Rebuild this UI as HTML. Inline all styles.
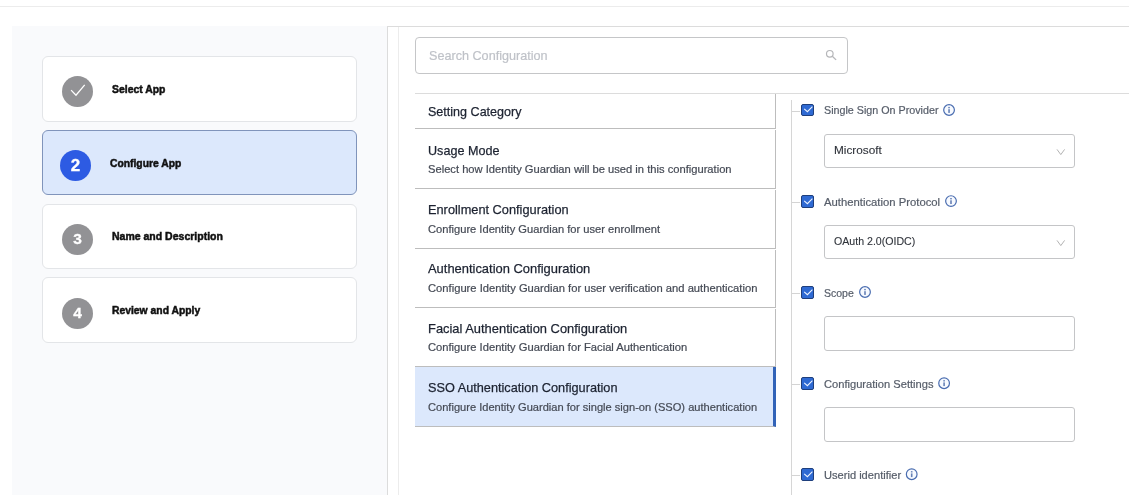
<!DOCTYPE html>
<html><head><meta charset="utf-8">
<style>
*{box-sizing:border-box;margin:0;padding:0}
html,body{width:1129px;height:495px;overflow:hidden;background:#fff;font-family:"Liberation Sans",sans-serif;}
body{position:relative}
.abs{position:absolute}
.tx{white-space:nowrap;transform-origin:0 0;line-height:normal}
.topline{left:0;top:6px;width:1129px;height:1px;background:#ececec}
.leftpanel{left:12px;top:26px;width:375px;height:480px;background:#f9fafc}
.rightbox{left:387px;top:26px;width:760px;height:480px;border:1px solid #dcdcdc;background:#fff}
.vline2{left:398px;top:27px;width:1px;height:480px;background:#ececec}
.card{left:42px;width:315px;height:65px;border:1px solid #e3e5e8;border-radius:6px;background:#fff}
.card.active{background:#dce8fc;border-color:#8094bb}
.circ{width:31px;height:31px;border-radius:50%;background:#929295;color:#fff;font-weight:bold;font-size:15.5px;text-align:center;line-height:30px;-webkit-text-stroke:0.3px #fff}
.circ.blue{background:#2d5be3}
.ctext{font-weight:bold;font-size:12px;color:#111;-webkit-text-stroke:0.5px #111}
.search{left:415px;top:37px;width:433px;height:37px;border:1px solid #c5c6c8;border-radius:4px;background:#fff}
.stext{font-size:13.5px;color:#bfc2c8;-webkit-text-stroke:0.2px #bfc2c8}
.row{left:415px;width:361px;border-bottom:1px solid #bdbdbd;border-right:1px solid #bdbdbd}
.t{font-size:13.5px;color:#1c2230;-webkit-text-stroke:0.25px #1c2230}
.d{font-size:12px;color:#454a55;-webkit-text-stroke:0.2px #454a55}
.row.sel{background:#dce8fc;border-right:3px solid #3263b8}
.tree{left:791px;top:100px;width:1px;height:401px;background:#d6d6d6}
.tick{left:792px;width:8px;height:1px;background:#d4d4d4}
.cb{left:801px;width:13px;height:13px;background:#2f6ad3;border:1px solid #1f3f7c;border-radius:2px}
.cb svg{position:absolute;left:-1px;top:-1px}
.lbl{font-size:12px;color:#565d69;-webkit-text-stroke:0.2px #565d69}
.val{font-size:12px;color:#2f333a;-webkit-text-stroke:0.1px #2f333a}
.inp{left:824px;width:251px;height:34px;border:1px solid #c4c5c7;border-radius:3px;background:#fff}
.topr{left:415px;top:93px;width:714px;height:1px;background:#dcdcdc}
#wrap{position:absolute;left:0;top:0;width:1129px;height:495px;overflow:hidden;will-change:transform}
</style></head><body><div id="wrap">
<div class="abs topline"></div>
<div class="abs leftpanel"></div>
<div class="abs rightbox"></div>
<div class="abs vline2"></div>

<div class="abs card" style="top:56px;height:66px"></div>
<div class="abs card active" style="top:130px"></div>
<div class="abs card" style="top:204px"></div>
<div class="abs card" style="top:277px;height:66px"></div>

<div class="abs circ" style="left:62px;top:75.5px"><svg width="31" height="31" viewBox="0 0 31 31" style="display:block"><path d="M9.1 14.1 L14 19.2 L22.7 8.9" fill="none" stroke="#fff" stroke-width="1.3"/></svg></div>
<div class="abs circ blue" style="left:60px;top:150px;font-size:17px;line-height:32px">2</div>
<div class="abs circ" style="left:62px;top:223.5px">3</div>
<div class="abs circ" style="left:62px;top:298px">4</div>

<div class="abs search">
<svg class="abs" style="left:409px;top:11px" width="12" height="12" viewBox="0 0 12 12"><circle cx="4.8" cy="4.8" r="3.3" fill="none" stroke="#b5b6b9" stroke-width="1.2"/><path d="M7.3 7.3 L11.1 10.9" stroke="#b5b6b9" stroke-width="1.3"/></svg>
</div>

<div class="abs row" style="top:94px;height:35px"></div>
<div class="abs row" style="top:130px;height:59px"></div>
<div class="abs row" style="top:190px;height:59px"></div>
<div class="abs row" style="top:250px;height:58px"></div>
<div class="abs row" style="top:309px;height:58px"></div>
<div class="abs row sel" style="top:367px;height:60px"></div>

<div class="abs topr"></div>
<div class="abs tree"></div>

<div class="abs tick" style="top:111px"></div>
<div class="abs cb" style="top:104px;height:12px"><svg width="13" height="12" viewBox="0 0 13 12"><path d="M3.2 4.8 L6.4 7.7 L11.4 2.6999999999999993" fill="none" stroke="#eef4ff" stroke-width="1.1"/></svg></div>
<svg class="abs" style="left:942px;top:103px" width="15" height="15" viewBox="0 0 15 15"><circle cx="7.05" cy="7.00" r="5.35" fill="#f7faff" stroke="#4a6db0" stroke-width="1.2"/><rect x="6.25" y="6.20" width="1.6" height="3.7" fill="#6681b6"/><rect x="6.25" y="3.90" width="1.6" height="1.4" fill="#6681b6"/></svg>
<div class="abs inp" style="top:134px;height:34px"></div>
<svg class="abs" style="left:1054px;top:147px" width="13" height="11" viewBox="0 0 13 11"><path d="M3.00 2.40 L6.80 7.60 L10.60 2.40" fill="none" stroke="#b3b3b3" stroke-width="1"/></svg>
<div class="abs tick" style="top:202px"></div>
<div class="abs cb" style="top:195px;height:13px"><svg width="13" height="13" viewBox="0 0 13 13"><path d="M3.2 5.8 L6.4 8.7 L11.4 3.6999999999999993" fill="none" stroke="#eef4ff" stroke-width="1.1"/></svg></div>
<svg class="abs" style="left:944px;top:194px" width="15" height="15" viewBox="0 0 15 15"><circle cx="7.00" cy="7.10" r="5.35" fill="#f7faff" stroke="#4a6db0" stroke-width="1.2"/><rect x="6.20" y="6.30" width="1.6" height="3.7" fill="#6681b6"/><rect x="6.20" y="4.00" width="1.6" height="1.4" fill="#6681b6"/></svg>
<div class="abs inp" style="top:225px;height:34px"></div>
<svg class="abs" style="left:1054px;top:238px" width="13" height="11" viewBox="0 0 13 11"><path d="M3.00 2.40 L6.80 7.60 L10.60 2.40" fill="none" stroke="#b3b3b3" stroke-width="1"/></svg>
<div class="abs tick" style="top:293px"></div>
<div class="abs cb" style="top:286px;height:13px"><svg width="13" height="13" viewBox="0 0 13 13"><path d="M3.2 5.8 L6.4 8.7 L11.4 3.6999999999999993" fill="none" stroke="#eef4ff" stroke-width="1.1"/></svg></div>
<svg class="abs" style="left:858px;top:285px" width="15" height="15" viewBox="0 0 15 15"><circle cx="7.00" cy="7.00" r="5.35" fill="#f7faff" stroke="#4a6db0" stroke-width="1.2"/><rect x="6.20" y="6.20" width="1.6" height="3.7" fill="#6681b6"/><rect x="6.20" y="3.90" width="1.6" height="1.4" fill="#6681b6"/></svg>
<div class="abs inp" style="top:316px;height:35px"></div>
<div class="abs tick" style="top:384px"></div>
<div class="abs cb" style="top:377px;height:13px"><svg width="13" height="13" viewBox="0 0 13 13"><path d="M3.2 5.8 L6.4 8.7 L11.4 3.6999999999999993" fill="none" stroke="#eef4ff" stroke-width="1.1"/></svg></div>
<svg class="abs" style="left:937px;top:376px" width="15" height="15" viewBox="0 0 15 15"><circle cx="7.10" cy="7.20" r="5.35" fill="#f7faff" stroke="#4a6db0" stroke-width="1.2"/><rect x="6.30" y="6.40" width="1.6" height="3.7" fill="#6681b6"/><rect x="6.30" y="4.10" width="1.6" height="1.4" fill="#6681b6"/></svg>
<div class="abs inp" style="top:407px;height:35px"></div>
<div class="abs tick" style="top:475px"></div>
<div class="abs cb" style="top:468px;height:13px"><svg width="13" height="13" viewBox="0 0 13 13"><path d="M3.2 5.8 L6.4 8.7 L11.4 3.6999999999999993" fill="none" stroke="#eef4ff" stroke-width="1.1"/></svg></div>
<svg class="abs" style="left:904px;top:467px" width="15" height="15" viewBox="0 0 15 15"><circle cx="7.70" cy="7.20" r="5.35" fill="#f7faff" stroke="#4a6db0" stroke-width="1.2"/><rect x="6.90" y="6.40" width="1.6" height="3.7" fill="#6681b6"/><rect x="6.90" y="4.10" width="1.6" height="1.4" fill="#6681b6"/></svg>

<div class="abs tx ctext" id="c1" style="left:112px;top:83.00px;font-size:11px;transform:scaleX(0.9477)">Select App</div>
<div class="abs tx ctext" id="c2" style="left:110px;top:157.00px;font-size:11px;transform:scaleX(0.9385)">Configure App</div>
<div class="abs tx ctext" id="c3" style="left:112px;top:230.00px;font-size:11px;transform:scaleX(0.9549)">Name and Description</div>
<div class="abs tx ctext" id="c4" style="left:112px;top:304.00px;font-size:11px;transform:scaleX(0.9410)">Review and Apply</div>
<div class="abs tx stext" id="s0" style="left:428.8px;top:48.30px;font-size:13.5px;transform:scaleX(0.9351)">Search Configuration</div>
<div class="abs tx t" id="t0" style="left:427.8px;top:104.00px;font-size:13.5px;transform:scaleX(0.9298)">Setting Category</div>
<div class="abs tx t" id="t1" style="left:427.8px;top:143.00px;font-size:13.5px;transform:scaleX(0.9328)">Usage Mode</div>
<div class="abs tx d" id="d1" style="left:427.8px;top:163.00px;font-size:10.7px;transform:scaleX(1.0450)">Select how Identity Guardian will be used in this configuration</div>
<div class="abs tx t" id="t2" style="left:427.8px;top:202.00px;font-size:13.5px;transform:scaleX(0.9462)">Enrollment Configuration</div>
<div class="abs tx d" id="d2" style="left:427.8px;top:222.60px;font-size:10.7px;transform:scaleX(1.0418)">Configure Identity Guardian for user enrollment</div>
<div class="abs tx t" id="t3" style="left:427.8px;top:261.00px;font-size:13.5px;transform:scaleX(0.9568)">Authentication Configuration</div>
<div class="abs tx d" id="d3" style="left:427.8px;top:282.00px;font-size:10.7px;transform:scaleX(1.0481)">Configure Identity Guardian for user verification and authentication</div>
<div class="abs tx t" id="t4" style="left:427.8px;top:321.00px;font-size:13.5px;transform:scaleX(0.9552)">Facial Authentication Configuration</div>
<div class="abs tx d" id="d4" style="left:427.8px;top:341.00px;font-size:10.7px;transform:scaleX(1.0462)">Configure Identity Guardian for Facial Authentication</div>
<div class="abs tx t" id="t5" style="left:427.8px;top:380.00px;font-size:13.5px;transform:scaleX(0.9421)">SSO Authentication Configuration</div>
<div class="abs tx d" id="d5" style="left:427.8px;top:400.50px;font-size:10.7px;transform:scaleX(1.0377)">Configure Identity Guardian for single sign-on (SSO) authentication</div>
<div class="abs tx lbl" id="l1" style="left:824px;top:103.90px;font-size:10.5px;transform:scaleX(1.0218)">Single Sign On Provider</div>
<div class="abs tx lbl" id="l2" style="left:824px;top:195.60px;font-size:10.5px;transform:scaleX(1.0752)">Authentication Protocol</div>
<div class="abs tx lbl" id="l3" style="left:824px;top:286.70px;font-size:10.5px;transform:scaleX(1.0006)">Scope</div>
<div class="abs tx lbl" id="l4" style="left:824px;top:377.70px;font-size:10.5px;transform:scaleX(1.0597)">Configuration Settings</div>
<div class="abs tx lbl" id="l5" style="left:824px;top:468.80px;font-size:10.5px;transform:scaleX(1.0568)">Userid identifier</div>
<div class="abs tx val" id="v1" style="left:833.7px;top:143.80px;font-size:10.5px;transform:scaleX(1.1222)">Microsoft</div>
<div class="abs tx val" id="v2" style="left:833.6px;top:235.00px;font-size:10.5px;transform:scaleX(1.0095)">OAuth 2.0(OIDC)</div>
</div></body></html>
